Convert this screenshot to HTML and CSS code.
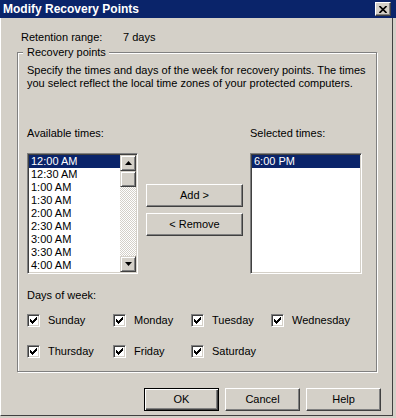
FILE: index.html
```
<!DOCTYPE html>
<html>
<head>
<meta charset="utf-8">
<link rel="stylesheet" href="styles.css">
</head>
<body>
<div class="titlebar">
  <span class="title">Modify Recovery Points</span>
  <span class="close"><svg width="8" height="7" viewBox="0 0 8 7"><path d="M0.5 0 L7.5 7 M7.5 0 L0.5 7" stroke="#000" stroke-width="1.6"/></svg></span>
</div>
<div class="window">
  <div class="retention"><span class="ret-label">Retention range:</span><span>7 days</span></div>
  <div class="group">
    <span class="legend">Recovery points</span>
    <p class="desc">Specify the times and days of the week for recovery points. The times<br>you select reflect the local time zones of your protected computers.</p>
    <div class="lists">
      <div class="col col-left">
        <div class="label">Available times:</div>
        <div class="listbox lb-left">
          <div class="items">
            <div class="item sel">12:00 AM</div>
            <div class="item">12:30 AM</div>
            <div class="item">1:00 AM</div>
            <div class="item">1:30 AM</div>
            <div class="item">2:00 AM</div>
            <div class="item">2:30 AM</div>
            <div class="item">3:00 AM</div>
            <div class="item">3:30 AM</div>
            <div class="item">4:00 AM</div>
          </div>
          <div class="scrollbar">
            <div class="sbtn"><svg width="7" height="4" viewBox="0 0 7 4"><path d="M3.5 0 L7 4 L0 4 Z" fill="#000"/></svg></div>
            <div class="thumb"></div>
            <div class="track"></div>
            <div class="sbtn"><svg width="7" height="4" viewBox="0 0 7 4"><path d="M0 0 L7 0 L3.5 4 Z" fill="#000"/></svg></div>
          </div>
        </div>
      </div>
      <div class="col col-mid">
        <button class="btn mid">Add &gt;</button>
        <button class="btn mid">&lt; Remove</button>
      </div>
      <div class="col col-right">
        <div class="label">Selected times:</div>
        <div class="listbox lb-right">
          <div class="items">
            <div class="item sel">6:00 PM</div>
          </div>
        </div>
      </div>
    </div>
    <div class="label days-label">Days of week:</div>
    <div class="days">
      <label class="day"><span class="cb"><svg width="7" height="7" viewBox="0 0 7 7" shape-rendering="crispEdges"><path d="M0 2h1v3h-1z M1 3h1v3h-1z M2 4h1v3h-1z M3 3h1v3h-1z M4 2h1v3h-1z M5 1h1v3h-1z M6 0h1v3h-1z" fill="#000"/></svg></span>Sunday</label>
      <label class="day"><span class="cb"><svg width="7" height="7" viewBox="0 0 7 7" shape-rendering="crispEdges"><path d="M0 2h1v3h-1z M1 3h1v3h-1z M2 4h1v3h-1z M3 3h1v3h-1z M4 2h1v3h-1z M5 1h1v3h-1z M6 0h1v3h-1z" fill="#000"/></svg></span>Monday</label>
      <label class="day"><span class="cb"><svg width="7" height="7" viewBox="0 0 7 7" shape-rendering="crispEdges"><path d="M0 2h1v3h-1z M1 3h1v3h-1z M2 4h1v3h-1z M3 3h1v3h-1z M4 2h1v3h-1z M5 1h1v3h-1z M6 0h1v3h-1z" fill="#000"/></svg></span>Tuesday</label>
      <label class="day"><span class="cb"><svg width="7" height="7" viewBox="0 0 7 7" shape-rendering="crispEdges"><path d="M0 2h1v3h-1z M1 3h1v3h-1z M2 4h1v3h-1z M3 3h1v3h-1z M4 2h1v3h-1z M5 1h1v3h-1z M6 0h1v3h-1z" fill="#000"/></svg></span>Wednesday</label>
      <label class="day"><span class="cb"><svg width="7" height="7" viewBox="0 0 7 7" shape-rendering="crispEdges"><path d="M0 2h1v3h-1z M1 3h1v3h-1z M2 4h1v3h-1z M3 3h1v3h-1z M4 2h1v3h-1z M5 1h1v3h-1z M6 0h1v3h-1z" fill="#000"/></svg></span>Thursday</label>
      <label class="day"><span class="cb"><svg width="7" height="7" viewBox="0 0 7 7" shape-rendering="crispEdges"><path d="M0 2h1v3h-1z M1 3h1v3h-1z M2 4h1v3h-1z M3 3h1v3h-1z M4 2h1v3h-1z M5 1h1v3h-1z M6 0h1v3h-1z" fill="#000"/></svg></span>Friday</label>
      <label class="day"><span class="cb"><svg width="7" height="7" viewBox="0 0 7 7" shape-rendering="crispEdges"><path d="M0 2h1v3h-1z M1 3h1v3h-1z M2 4h1v3h-1z M3 3h1v3h-1z M4 2h1v3h-1z M5 1h1v3h-1z M6 0h1v3h-1z" fill="#000"/></svg></span>Saturday</label>
    </div>
  </div>
  <div class="buttons">
    <button class="btn dlg default">OK</button>
    <button class="btn dlg">Cancel</button>
    <button class="btn dlg">Help</button>
  </div>
</div>
</body>
</html>
```
FILE: styles.css
```
* { box-sizing: border-box; }
html, body { margin: 0; }
body {
  width: 396px;
  height: 418px;
  overflow: hidden;
  background: #d4d0c8;
  color: #000;
  font: 11px/13px "Liberation Sans", Arial, sans-serif;
}
.titlebar {
  height: 18px;
  background: #0a246a;
  color: #fff;
  display: flex;
  align-items: center;
  justify-content: space-between;
  padding: 0 5px 0 3px;
}
.title { font-weight: bold; font-size: 12px; }
.close {
  width: 16px;
  height: 14px;
  background: #d4d0c8;
  border: 1px solid;
  border-color: #fff #404040 #404040 #fff;
  box-shadow: inset -1px -1px #808080;
  display: flex;
  align-items: center;
  justify-content: center;
}
.close svg { display: block; }
.window {
  width: 393px;
  height: 398px;
  border-left: 1px solid #fff;
  border-right: 1px solid #404040;
  border-bottom: 1px solid #404040;
  padding: 13px 11px 0 16px;
}
.retention { display: flex; margin-left: 4px; }
.ret-label { width: 102px; }
.group {
  margin-top: 8px;
  width: 360px;
  height: 320px;
  border: 1px solid #808080;
  box-shadow: 1px 1px #fff, inset 1px 1px #fff;
  padding: 0 9px;
}
.legend {
  display: block;
  width: max-content;
  height: 13px;
  margin: -7px 0 0 -4px;
  padding: 0 3px 0 4px;
  background: #d4d0c8;
}
.desc { margin: 5px 0 0; }
.lists { display: flex; margin-top: 37px; }
.col { display: flex; flex-direction: column; }
.label { height: 13px; }
.listbox {
  margin-top: 13px;
  height: 121px;
  background: #fff;
  border: 1px solid;
  border-color: #808080 #fff #fff #808080;
  box-shadow: inset 1px 1px #404040, inset -1px -1px #d4d0c8;
  padding: 1px;
  display: flex;
}
.lb-left { width: 111px; }
.lb-right { width: 112px; }
.col-right { margin-left: 7px; }
.items { flex: 1; }
.item { height: 13px; padding-left: 2px; white-space: nowrap; }
.item.sel { background: #0a246a; color: #fff; }
.scrollbar { width: 16px; display: flex; flex-direction: column; }
.sbtn, .thumb {
  height: 16px;
  background: #d4d0c8;
  border: 1px solid;
  border-color: #d4d0c8 #404040 #404040 #d4d0c8;
  box-shadow: inset 1px 1px #fff, inset -1px -1px #808080;
  display: flex;
  align-items: center;
  justify-content: center;
}
.sbtn svg { display: block; }
.track {
  flex: 1;
  background: repeating-conic-gradient(#d4d0c8 0 25%, #fff 0 50%) 0 0 / 2px 2px;
}
.col-mid { margin: 57px 0 0 8px; width: 97px; gap: 6px; }
.btn {
  font: 11px/13px "Liberation Sans", Arial, sans-serif;
  color: #000;
  background: #d4d0c8;
  border: 1px solid;
  border-color: #fff #404040 #404040 #fff;
  box-shadow: inset -1px -1px #808080;
  padding: 0;
  margin: 0;
}
.mid { width: 97px; height: 23px; }
.days-label { margin-top: 15px; }
.days {
  margin-top: 12px;
  display: grid;
  grid-template-columns: 86px 78px 80px auto;
  row-gap: 18px;
}
.day { display: flex; align-items: center; gap: 8px; height: 13px; }
.cb {
  width: 13px;
  height: 13px;
  background: #fff;
  border: 1px solid;
  border-color: #808080 #fff #fff #808080;
  box-shadow: inset 1px 1px #404040, inset -1px -1px #d4d0c8;
  padding: 2px;
  flex: none;
}
.cb svg { display: block; }
.buttons {
  display: flex;
  justify-content: flex-end;
  gap: 6px;
  margin-top: 16px;
}
.dlg { width: 75px; height: 23px; }
.default {
  border-color: #000;
  box-shadow: inset 1px 1px #fff, inset -1px -1px #404040, inset -2px -2px #808080;
}
```
